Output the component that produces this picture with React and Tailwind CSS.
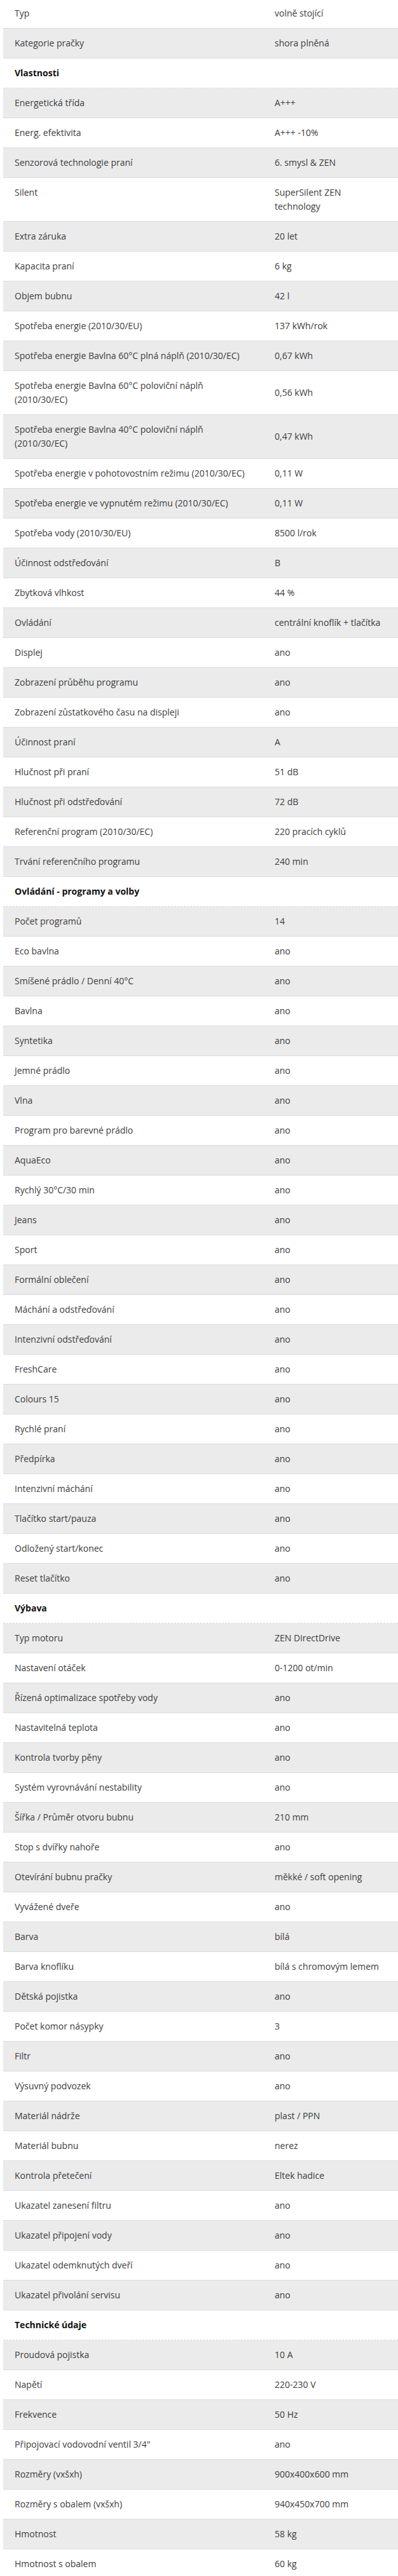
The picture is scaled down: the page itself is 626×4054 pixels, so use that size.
import React from 'react';

const rows = [
  ['Typ', 'volně stojící'],
  ['Kategorie pračky', 'shora plněná'],
  { heading: 'Vlastnosti' },
  ['Energetická třída', 'A+++'],
  ['Energ. efektivita', 'A+++ -10%'],
  ['Senzorová technologie praní', '6. smysl & ZEN'],
  ['Silent', 'SuperSilent ZEN technology'],
  ['Extra záruka', '20 let'],
  ['Kapacita praní', '6 kg'],
  ['Objem bubnu', '42 l'],
  ['Spotřeba energie (2010/30/EU)', '137 kWh/rok'],
  ['Spotřeba energie Bavlna 60°C plná náplň (2010/30/EC)', '0,67 kWh'],
  ['Spotřeba energie Bavlna 60°C poloviční náplň (2010/30/EC)', '0,56 kWh'],
  ['Spotřeba energie Bavlna 40°C poloviční náplň (2010/30/EC)', '0,47 kWh'],
  ['Spotřeba energie v pohotovostním režimu (2010/30/EC)', '0,11 W'],
  ['Spotřeba energie ve vypnutém režimu (2010/30/EC)', '0,11 W'],
  ['Spotřeba vody (2010/30/EU)', '8500 l/rok'],
  ['Účinnost odstřeďování', 'B'],
  ['Zbytková vlhkost', '44 %'],
  ['Ovládání', 'centrální knoflík + tlačítka'],
  ['Displej', 'ano'],
  ['Zobrazení průběhu programu', 'ano'],
  ['Zobrazení zůstatkového času na displeji', 'ano'],
  ['Účinnost praní', 'A'],
  ['Hlučnost při praní', '51 dB'],
  ['Hlučnost při odstřeďování', '72 dB'],
  ['Referenční program (2010/30/EC)', '220 pracích cyklů'],
  ['Trvání referenčního programu', '240 min'],
  { heading: 'Ovládání - programy a volby' },
  ['Počet programů', '14'],
  ['Eco bavlna', 'ano'],
  ['Smíšené prádlo / Denní 40°C', 'ano'],
  ['Bavlna', 'ano'],
  ['Syntetika', 'ano'],
  ['Jemné prádlo', 'ano'],
  ['Vlna', 'ano'],
  ['Program pro barevné prádlo', 'ano'],
  ['AquaEco', 'ano'],
  ['Rychlý 30°C/30 min', 'ano'],
  ['Jeans', 'ano'],
  ['Sport', 'ano'],
  ['Formální oblečení', 'ano'],
  ['Máchání a odstřeďování', 'ano'],
  ['Intenzivní odstřeďování', 'ano'],
  ['FreshCare', 'ano'],
  ['Colours 15', 'ano'],
  ['Rychlé praní', 'ano'],
  ['Předpírka', 'ano'],
  ['Intenzivní máchání', 'ano'],
  ['Tlačítko start/pauza', 'ano'],
  ['Odložený start/konec', 'ano'],
  ['Reset tlačítko', 'ano'],
  { heading: 'Výbava' },
  ['Typ motoru', 'ZEN DirectDrive'],
  ['Nastavení otáček', '0-1200 ot/min'],
  ['Řízená optimalizace spotřeby vody', 'ano'],
  ['Nastavitelná teplota', 'ano'],
  ['Kontrola tvorby pěny', 'ano'],
  ['Systém vyrovnávání nestability', 'ano'],
  ['Šířka / Průměr otvoru bubnu', '210 mm'],
  ['Stop s dvířky nahoře', 'ano'],
  ['Otevírání bubnu pračky', 'měkké / soft opening'],
  ['Vyvážené dveře', 'ano'],
  ['Barva', 'bílá'],
  ['Barva knoflíku', 'bílá s chromovým lemem'],
  ['Dětská pojistka', 'ano'],
  ['Počet komor násypky', '3'],
  ['Filtr', 'ano'],
  ['Výsuvný podvozek', 'ano'],
  ['Materiál nádrže', 'plast / PPN'],
  ['Materiál bubnu', 'nerez'],
  ['Kontrola přetečení', 'Eltek hadice'],
  ['Ukazatel zanesení filtru', 'ano'],
  ['Ukazatel připojení vody', 'ano'],
  ['Ukazatel odemknutých dveří', 'ano'],
  ['Ukazatel přivolání servisu', 'ano'],
  { heading: 'Technické údaje' },
  ['Proudová pojistka', '10 A'],
  ['Napětí', '220-230 V'],
  ['Frekvence', '50 Hz'],
  ['Připojovací vodovodní ventil 3/4"', 'ano'],
  ['Rozměry (vxšxh)', '900x400x600 mm'],
  ['Rozměry s obalem (vxšxh)', '940x450x700 mm'],
  ['Hmotnost', '58 kg'],
  ['Hmotnost s obalem', '60 kg'],
];

function SpecRow({ row, index }) {
  const striped = index % 2 === 1 ? 'bg-[#ebebeb]' : 'bg-white';

  if (row.heading) {
    return (
      <div className={`${striped} border-b border-dashed border-[#d9d9d9] py-3 pl-[18px]`}>
        <span className="font-bold text-[#111]">{row.heading}</span>
      </div>
    );
  }

  const [label, value] = row;
  return (
    <div className={`${striped} grid grid-cols-[410px_1fr] border-b border-[#dcdcdc]`}>
      <div className="py-3 pl-[18px] pr-[12px]">{label}</div>
      <div className="flex items-center py-3 pl-[17px] pr-[22px]">{value}</div>
    </div>
  );
}

export default function App() {
  return (
    <div className="min-h-screen bg-white font-['Open_Sans',sans-serif] text-[14px] leading-[22px] text-[#3d3d3d] overflow-hidden">
      <div className="-mt-[2px] pl-[5px]">
        {rows.map((row, i) => (
          <SpecRow key={i} row={row} index={i} />
        ))}
      </div>
    </div>
  );
}
